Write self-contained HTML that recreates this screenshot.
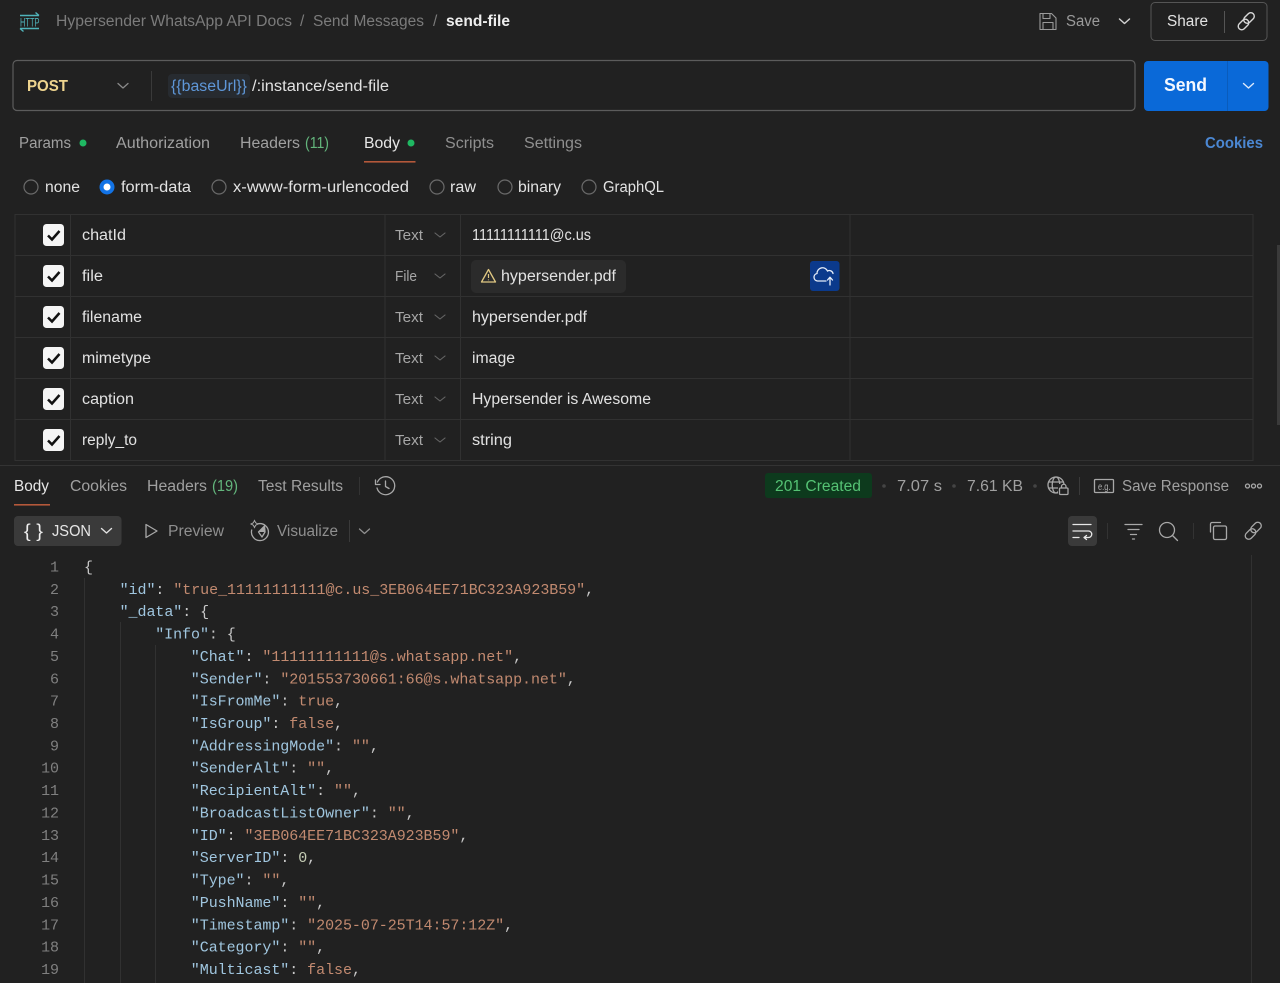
<!DOCTYPE html>
<html><head><meta charset="utf-8"><title>send-file</title>
<style>
html,body{margin:0;padding:0;background:#212121;width:1280px;height:983px;overflow:hidden}
svg{display:block}
text{font-family:"Liberation Sans",sans-serif;font-size:15.5px;fill:#a0a0a0}
.m{font-family:"Liberation Mono",monospace;font-size:15px;letter-spacing:-.05px;fill:#c8c8c8}
.n{font-family:"Liberation Mono",monospace;font-size:15px;letter-spacing:-.05px;fill:#808080;text-anchor:end}
.k{fill:#a0c6df}.s{fill:#c28a70}.p{fill:#cfcfcf}
.w{fill:#e6e6e6}.d{fill:#7b7b7b}.g{fill:#63b57c}
.b{fill:#e2e2e2}.t{fill:#a6a6a6;font-size:14.5px}
.i{fill:none;stroke:#a8a8a8;stroke-width:1.3;stroke-linecap:round;stroke-linejoin:round}
.l{stroke:#313131;stroke-width:1;fill:none}
</style></head><body>
<svg width="1280" height="983" viewBox="0 0 1280 983" xmlns="http://www.w3.org/2000/svg">
<rect width="1280" height="983" fill="#212121"/>

<!-- header -->
<g fill="none" stroke="#4fb3ba" stroke-width="1.400">
<path d="M20 15.500H39M35.500 12.500l3.500 3"/><path d="M20 28.500H39M23.500 31.500l-3.500-3"/>
</g>
<text x="20" y="26.500" textLength="19.500" lengthAdjust="spacingAndGlyphs" style="font-size:11.500px;fill:#4fb3ba">HTTP</text>
<text x="56" y="26" textLength="236" lengthAdjust="spacingAndGlyphs" class="d">Hypersender WhatsApp API Docs</text>
<text x="300" y="26" class="d">/</text>
<text x="313" y="26" textLength="111" lengthAdjust="spacingAndGlyphs" class="d">Send Messages</text>
<text x="433" y="26" class="d">/</text>
<text x="446" y="26" textLength="64" lengthAdjust="spacingAndGlyphs" style="fill:#eee;font-weight:700">send-file</text>

<path d="M1040 13.500h11.500l4.500 4.500V29.500h-16zM1043 13.500v5h7v-5M1043 29.500v-7h10v7" fill="none" stroke="#9a9a9a" stroke-width="1.100" stroke-linejoin="round"/>
<text x="1066" y="26" textLength="34" lengthAdjust="spacingAndGlyphs" style="fill:#9a9a9a">Save</text>
<path d="M1119.500 19l5 4.500 5-4.500" fill="none" stroke="#d0d0d0" stroke-width="1.500" stroke-linecap="round" stroke-linejoin="round"/>
<rect x="1151" y="2.500" width="116" height="38" rx="4" fill="none" stroke="#555"/>
<text x="1167" y="26" textLength="41" lengthAdjust="spacingAndGlyphs" class="b">Share</text>
<path d="M1224.500 11v22" stroke="#555"/>
<g fill="none" stroke="#d8d8d8" stroke-width="1.400">
<rect x="1237.500" y="21" width="12" height="7" rx="3.500" transform="rotate(-45 1243.500 24.500)"/>
<rect x="1243" y="14.500" width="12" height="7" rx="3.500" transform="rotate(-45 1249 18)"/>
</g>

<!-- url bar -->
<rect x="13" y="60.500" width="1122" height="50" rx="4" fill="#212121" stroke="#5c5c5c" stroke-width="1.200"/>
<text x="27" y="91" textLength="41" lengthAdjust="spacingAndGlyphs" style="fill:#efd58f;font-weight:700">POST</text>
<path d="M118 83.500l5 4.500 5-4.500" fill="none" stroke="#8a8a8a" stroke-width="1.300" stroke-linecap="round" stroke-linejoin="round"/>
<path d="M151.500 71v30" stroke="#3a3a3a"/>
<rect x="168" y="74" width="82" height="24" rx="4" fill="#272b30"/>
<text x="171" y="91" textLength="76" lengthAdjust="spacingAndGlyphs" style="fill:#5f97d8">{{baseUrl}}</text>
<text x="252" y="91" textLength="137" lengthAdjust="spacingAndGlyphs" class="b">/:instance/send-file</text>

<rect x="1144" y="61" width="124.500" height="50" rx="4" fill="#0a69d8"/>
<path d="M1227.500 61v50" stroke="#0a5cbc"/>
<text x="1164" y="91" textLength="43" lengthAdjust="spacingAndGlyphs" style="fill:#f4f8ff;font-size:18px;font-weight:700">Send</text>
<path d="M1243.500 83.500l5 4.500 5-4.500" fill="none" stroke="#dce9fb" stroke-width="1.400" stroke-linecap="round" stroke-linejoin="round"/>

<!-- request tabs -->
<text x="19" y="148" textLength="52" lengthAdjust="spacingAndGlyphs">Params</text>
<circle cx="83" cy="143" r="3.500" fill="#1fb862"/>
<text x="116" y="148" textLength="94" lengthAdjust="spacingAndGlyphs">Authorization</text>
<text x="240" y="148" textLength="60" lengthAdjust="spacingAndGlyphs">Headers</text>
<text x="305" y="148" textLength="24" lengthAdjust="spacingAndGlyphs" class="g">(11)</text>
<text x="364" y="148" textLength="36" lengthAdjust="spacingAndGlyphs" class="w">Body</text>
<circle cx="411" cy="143" r="3.500" fill="#1fb862"/>
<rect x="364" y="161" width="51.500" height="1.600" fill="#b4583a"/>
<text x="445" y="148" textLength="49" lengthAdjust="spacingAndGlyphs" style="fill:#8f8f8f">Scripts</text>
<text x="524" y="148" textLength="58" lengthAdjust="spacingAndGlyphs" style="fill:#8f8f8f">Settings</text>
<text x="1205" y="148" textLength="58" lengthAdjust="spacingAndGlyphs" style="fill:#4b87d2;font-weight:700">Cookies</text>

<!-- radios -->
<g fill="none" stroke="#6a6a6a" stroke-width="1.200">
<circle cx="31" cy="187" r="7"/><circle cx="219" cy="187" r="7"/><circle cx="437" cy="187" r="7"/><circle cx="505" cy="187" r="7"/><circle cx="589" cy="187" r="7"/>
</g>
<circle cx="107" cy="187" r="7.500" fill="#1273e6"/><circle cx="107" cy="187" r="3.500" fill="#fff"/>
<text x="45" y="192" textLength="35" lengthAdjust="spacingAndGlyphs" class="b">none</text>
<text x="121" y="192" textLength="70" lengthAdjust="spacingAndGlyphs" class="b">form-data</text>
<text x="233" y="192" textLength="176" lengthAdjust="spacingAndGlyphs" class="b">x-www-form-urlencoded</text>
<text x="450" y="192" textLength="26" lengthAdjust="spacingAndGlyphs" class="b">raw</text>
<text x="518" y="192" textLength="43" lengthAdjust="spacingAndGlyphs" class="b">binary</text>
<text x="603" y="192" textLength="61" lengthAdjust="spacingAndGlyphs" class="b">GraphQL</text>

<!-- table -->
<path class="l" d="M15 214.500H1253M15 255.500H1253M15 296.500H1253M15 337.500H1253M15 378.500H1253M15 419.500H1253M15 460.500H1253"/>
<path class="l" d="M15 214V465M70.500 214V465M385 214V465M460.500 214V465M850 214V465M1253 214V465"/>
<rect x="1277" y="245" width="3" height="180" fill="#3a3a3a"/>

<g id="cb">
<rect x="43" y="224" width="21" height="22" rx="3.500" fill="#f5f5f5"/><path d="M48 235.500l4 4 7.500-8.500" fill="none" stroke="#111" stroke-width="2.500"/>
<rect x="43" y="265" width="21" height="22" rx="3.500" fill="#f5f5f5"/><path d="M48 276.500l4 4 7.500-8.500" fill="none" stroke="#111" stroke-width="2.500"/>
<rect x="43" y="306" width="21" height="22" rx="3.500" fill="#f5f5f5"/><path d="M48 317.500l4 4 7.500-8.500" fill="none" stroke="#111" stroke-width="2.500"/>
<rect x="43" y="347" width="21" height="22" rx="3.500" fill="#f5f5f5"/><path d="M48 358.500l4 4 7.500-8.500" fill="none" stroke="#111" stroke-width="2.500"/>
<rect x="43" y="388" width="21" height="22" rx="3.500" fill="#f5f5f5"/><path d="M48 399.500l4 4 7.500-8.500" fill="none" stroke="#111" stroke-width="2.500"/>
<rect x="43" y="429" width="21" height="22" rx="3.500" fill="#f5f5f5"/><path d="M48 440.500l4 4 7.500-8.500" fill="none" stroke="#111" stroke-width="2.500"/>
</g>

<text x="82" y="240" textLength="44" lengthAdjust="spacingAndGlyphs" class="b">chatId</text>
<text x="82" y="281" textLength="21" lengthAdjust="spacingAndGlyphs" class="b">file</text>
<text x="82" y="322" textLength="60" lengthAdjust="spacingAndGlyphs" class="b">filename</text>
<text x="82" y="363" textLength="69" lengthAdjust="spacingAndGlyphs" class="b">mimetype</text>
<text x="82" y="404" textLength="52" lengthAdjust="spacingAndGlyphs" class="b">caption</text>
<text x="82" y="445" textLength="55" lengthAdjust="spacingAndGlyphs" class="b">reply_to</text>

<text x="395" y="240" textLength="28" lengthAdjust="spacingAndGlyphs" class="t">Text</text>
<text x="395" y="281" textLength="22" lengthAdjust="spacingAndGlyphs" class="t">File</text>
<text x="395" y="322" textLength="28" lengthAdjust="spacingAndGlyphs" class="t">Text</text>
<text x="395" y="363" textLength="28" lengthAdjust="spacingAndGlyphs" class="t">Text</text>
<text x="395" y="404" textLength="28" lengthAdjust="spacingAndGlyphs" class="t">Text</text>
<text x="395" y="445" textLength="28" lengthAdjust="spacingAndGlyphs" class="t">Text</text>
<path d="M435 233l5 4 5-4M435 274l5 4 5-4M435 315l5 4 5-4M435 356l5 4 5-4M435 397l5 4 5-4M435 438l5 4 5-4" fill="none" stroke="#666" stroke-width="1.100" stroke-linecap="round" stroke-linejoin="round"/>

<text x="472" y="240" textLength="119" lengthAdjust="spacingAndGlyphs" class="b">11111111111@c.us</text>
<rect x="471" y="260" width="155" height="33" rx="5" fill="#2b2b2b"/>
<path d="M488.500 269.500l-7 12.500h14z" fill="none" stroke="#e0c883" stroke-width="1.300" stroke-linejoin="round"/>
<path d="M488.500 274v4M488.500 279.500v.8" stroke="#e0c883" stroke-width="1.200"/>
<text x="501" y="281" textLength="115" lengthAdjust="spacingAndGlyphs" class="b">hypersender.pdf</text>
<rect x="810" y="261" width="29.500" height="30" rx="3" fill="#0b3a8c"/>
<path d="M826 281h-8.500a3.800 3.800 0 0 1-.5-7.500 5.500 5.500 0 0 1 10.500-2.500 3.800 3.800 0 0 1 5.500 2.500" fill="none" stroke="#e4ecf8" stroke-width="1.300" stroke-linecap="round"/>
<path d="M830 285v-7.500M827.500 280l2.500-2.800 2.500 2.800" fill="none" stroke="#e4ecf8" stroke-width="1.300" stroke-linecap="round" stroke-linejoin="round"/>
<text x="472" y="322" textLength="115" lengthAdjust="spacingAndGlyphs" class="b">hypersender.pdf</text>
<text x="472" y="363" textLength="43" lengthAdjust="spacingAndGlyphs" class="b">image</text>
<text x="472" y="404" textLength="179" lengthAdjust="spacingAndGlyphs" class="b">Hypersender is Awesome</text>
<text x="472" y="445" textLength="40" lengthAdjust="spacingAndGlyphs" class="b">string</text>

<!-- response panel -->
<rect x="0" y="461" width="1280" height="522" fill="#212121"/>
<path d="M0 465.500H1280" stroke="#333"/>
<text x="14" y="491" textLength="35" lengthAdjust="spacingAndGlyphs" class="w">Body</text>
<rect x="14" y="504" width="36" height="1.600" fill="#b4583a"/>
<text x="70" y="491" textLength="57" lengthAdjust="spacingAndGlyphs">Cookies</text>
<text x="147" y="491" textLength="60" lengthAdjust="spacingAndGlyphs">Headers</text>
<text x="212" y="491" textLength="26" lengthAdjust="spacingAndGlyphs" class="g">(19)</text>
<text x="258" y="491" textLength="85" lengthAdjust="spacingAndGlyphs">Test Results</text>
<path d="M359.500 477v18" stroke="#333"/>
<path class="i" d="M377.500 482a9 9 0 1 1-.5 6M375.500 480v4.500h4.500M385.500 481v5.500l3.500 2"/>

<rect x="765" y="473" width="107" height="25" rx="3" fill="#0d3a1d"/>
<text x="775" y="491" textLength="86" lengthAdjust="spacingAndGlyphs" style="fill:#55c274">201 Created</text>
<circle cx="884" cy="486" r="1.800" fill="#444"/>
<text x="897" y="491" textLength="45" lengthAdjust="spacingAndGlyphs">7.07 s</text>
<circle cx="954" cy="486" r="1.800" fill="#444"/>
<text x="967" y="491" textLength="56" lengthAdjust="spacingAndGlyphs">7.61 KB</text>
<circle cx="1035" cy="486" r="1.800" fill="#444"/>
<circle class="i" cx="1056" cy="485" r="8"/>
<ellipse class="i" cx="1056" cy="485" rx="3.800" ry="8"/>
<path class="i" d="M1048.500 482h15M1048.500 488h15"/>
<rect x="1058" y="484" width="11" height="11" fill="#212121"/>
<rect x="1059.500" y="488" width="8.500" height="6.500" rx="1" class="i"/>
<path class="i" d="M1061.500 488v-1.500a2.200 2.200 0 0 1 4.500 0v1.500"/>
<path d="M1079.500 477v18" stroke="#3a3a3a"/>
<rect x="1094.500" y="479.500" width="19" height="13" rx="1" class="i"/>
<text x="1098" y="490" textLength="12.500" lengthAdjust="spacingAndGlyphs" style="font-size:10px;fill:#b0b0b0">e.g.</text>
<text x="1122" y="491" textLength="107" lengthAdjust="spacingAndGlyphs">Save Response</text>
<g fill="none" stroke="#a8a8a8" stroke-width="1.300"><circle cx="1247.500" cy="486" r="2"/><circle cx="1253.500" cy="486" r="2"/><circle cx="1259.500" cy="486" r="2"/></g>

<rect x="14" y="516" width="107.500" height="30" rx="4" fill="#3a3a3a"/>
<text x="24" y="537" textLength="19" lengthAdjust="spacingAndGlyphs" style="font-size:18px;fill:#eee">{ }</text>
<text x="52" y="536" textLength="39" lengthAdjust="spacingAndGlyphs" class="w">JSON</text>
<path d="M101.500 528.500l5 4.500 5-4.500" fill="none" stroke="#e0e0e0" stroke-width="1.400" stroke-linecap="round" stroke-linejoin="round"/>
<path class="i" d="M146 524.500v13l11-6.500z"/>
<text x="168" y="536" textLength="56" lengthAdjust="spacingAndGlyphs" style="fill:#8f8f8f">Preview</text>
<path class="i" d="M258.500 523.700A8.500 8.500 0 1 1 251.700 530"/>
<path class="i" d="M264.500 526l-6 6 3.500 5 3-5z"/>
<path d="M264.500 526l-6 6 6 0z" fill="#a8a8a8"/>
<path d="M254.500 520.500l1.200 2.300 2.300 1.200-2.300 1.200-1.200 2.300-1.200-2.300-2.300-1.200 2.300-1.200z" fill="none" stroke="#a8a8a8"/>
<text x="277" y="536" textLength="61" lengthAdjust="spacingAndGlyphs" style="fill:#8f8f8f">Visualize</text>
<path d="M349.500 520v22" stroke="#3a3a3a"/>
<path d="M359.500 529l5 4.500 5-4.500" fill="none" stroke="#8f8f8f" stroke-width="1.300" stroke-linecap="round" stroke-linejoin="round"/>

<rect x="1068" y="516" width="29" height="30" rx="4" fill="#3a3a3a"/>
<path d="M1073 524.500h18M1073 531h15.500a3 3 0 0 1 0 6.500h-4M1086.500 535.500l-2.500 2 2.500 2M1073 537.500h6" fill="none" stroke="#e8e8e8" stroke-width="1.300" stroke-linecap="round" stroke-linejoin="round"/>
<path d="M1107.500 523v16" stroke="#333"/>
<path class="i" d="M1125 524.500h17M1128 529.500h11M1130.500 534.500h6M1132.500 539h2"/>
<circle cx="1167" cy="530" r="7.500" class="i"/><path class="i" d="M1172.500 535.500l5 5"/>
<path d="M1193.500 523v16" stroke="#333"/>
<path class="i" d="M1210.500 532v-8a1.500 1.500 0 0 1 1.500-1.500h8.500"/>
<rect x="1213.500" y="526" width="13" height="13.500" rx="1.500" class="i"/>
<g class="i">
<rect x="1244.500" y="530.500" width="12" height="7" rx="3.500" transform="rotate(-45 1250.500 534)"/>
<rect x="1250" y="524" width="12" height="7" rx="3.500" transform="rotate(-45 1256 527.500)"/>
</g>

<!-- code -->
<path class="l" d="M84.500 578V983M120.500 622V983M155.500 645V983M1251.500 555V983"/>
<g transform="translate(0,.4)">
<text class="n" x="59" y="571">1</text><text class="m" x="84" y="571">{</text>
<text class="n" x="59" y="593.400">2</text><text class="m" x="119.600" y="593.400"><tspan class="k">"id"</tspan>: <tspan class="s">"true_11111111111@c.us_3EB064EE71BC323A923B59"</tspan>,</text>
<text class="n" x="59" y="615.700">3</text><text class="m" x="119.600" y="615.700"><tspan class="k">"_data"</tspan>: {</text>
<text class="n" x="59" y="638.100">4</text><text class="m" x="155.200" y="638.100"><tspan class="k">"Info"</tspan>: {</text>
<text class="n" x="59" y="660.500">5</text><text class="m" x="190.800" y="660.500"><tspan class="k">"Chat"</tspan>: <tspan class="s">"11111111111@s.whatsapp.net"</tspan>,</text>
<text class="n" x="59" y="682.900">6</text><text class="m" x="190.800" y="682.900"><tspan class="k">"Sender"</tspan>: <tspan class="s">"201553730661:66@s.whatsapp.net"</tspan>,</text>
<text class="n" x="59" y="705.200">7</text><text class="m" x="190.800" y="705.200"><tspan class="k">"IsFromMe"</tspan>: <tspan class="s">true</tspan>,</text>
<text class="n" x="59" y="727.600">8</text><text class="m" x="190.800" y="727.600"><tspan class="k">"IsGroup"</tspan>: <tspan class="s">false</tspan>,</text>
<text class="n" x="59" y="750">9</text><text class="m" x="190.800" y="750"><tspan class="k">"AddressingMode"</tspan>: <tspan class="s">""</tspan>,</text>
<text class="n" x="59" y="772.300">10</text><text class="m" x="190.800" y="772.300"><tspan class="k">"SenderAlt"</tspan>: <tspan class="s">""</tspan>,</text>
<text class="n" x="59" y="794.700">11</text><text class="m" x="190.800" y="794.700"><tspan class="k">"RecipientAlt"</tspan>: <tspan class="s">""</tspan>,</text>
<text class="n" x="59" y="817.100">12</text><text class="m" x="190.800" y="817.100"><tspan class="k">"BroadcastListOwner"</tspan>: <tspan class="s">""</tspan>,</text>
<text class="n" x="59" y="839.400">13</text><text class="m" x="190.800" y="839.400"><tspan class="k">"ID"</tspan>: <tspan class="s">"3EB064EE71BC323A923B59"</tspan>,</text>
<text class="n" x="59" y="861.800">14</text><text class="m" x="190.800" y="861.800"><tspan class="k">"ServerID"</tspan>: <tspan style="fill:#c4ccb4">0</tspan>,</text>
<text class="n" x="59" y="884.200">15</text><text class="m" x="190.800" y="884.200"><tspan class="k">"Type"</tspan>: <tspan class="s">""</tspan>,</text>
<text class="n" x="59" y="906.600">16</text><text class="m" x="190.800" y="906.600"><tspan class="k">"PushName"</tspan>: <tspan class="s">""</tspan>,</text>
<text class="n" x="59" y="928.900">17</text><text class="m" x="190.800" y="928.900"><tspan class="k">"Timestamp"</tspan>: <tspan class="s">"2025-07-25T14:57:12Z"</tspan>,</text>
<text class="n" x="59" y="951.300">18</text><text class="m" x="190.800" y="951.300"><tspan class="k">"Category"</tspan>: <tspan class="s">""</tspan>,</text>
<text class="n" x="59" y="973.700">19</text><text class="m" x="190.800" y="973.700"><tspan class="k">"Multicast"</tspan>: <tspan class="s">false</tspan>,</text>
</g>
</svg>
</body></html>
